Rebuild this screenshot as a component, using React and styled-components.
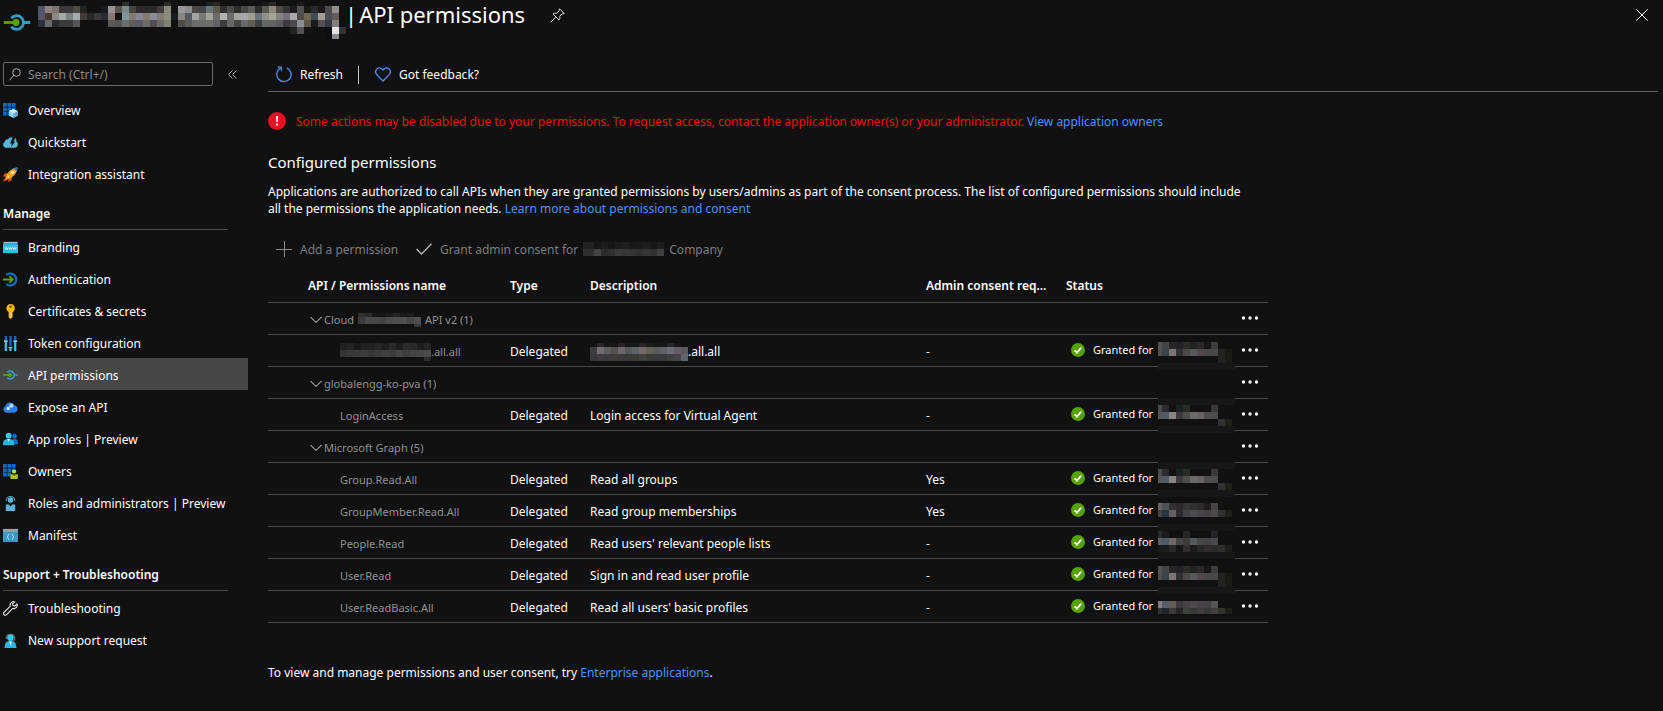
import React from 'react';
import styled, { createGlobalStyle } from 'styled-components';

const GlobalStyle = createGlobalStyle`
  * { box-sizing: border-box; }
  body {
    margin: 0;
    background: #111111;
    color: #ffffff;
    font-family: "Noto Sans", "Open Sans", sans-serif;
    font-size: 12px;
    line-height: 17px;
  }
  button, input { font: inherit; color: inherit; }
`;

/* ---------- pieces shared by the whole blade ---------- */

const PlainButton = styled.button`
  display: inline-flex;
  align-items: center;
  padding: 0;
  border: 0;
  background: transparent;
  cursor: pointer;
  white-space: nowrap;
  &:disabled { color: #7d7d7d; cursor: default; }
`;

const Link = styled.a`
  color: #4894fe;
  text-decoration: none;
`;

const Drawing = styled.svg`
  display: block;
  flex: none;
`;

/* ---------- header ---------- */

const Header = styled.header`
  display: flex;
  align-items: flex-start;
  height: 46px;
  padding: 0 15px 0 3px;
`;

const HeaderIcon = styled.span`
  padding-top: 14px;
  margin-right: 7px;
`;

const HeaderMosaic = styled.span`
  padding-top: 2px;
  margin-right: -3px;
`;

const Title = styled.h1`
  display: flex;
  gap: 2px;
  margin: 0;
  font-size: 22px;
  font-weight: 400;
  line-height: 28px;
  white-space: nowrap;
`;

const PinButton = styled(PlainButton)`
  margin: 8px auto 0 25px;
`;

const CloseButton = styled(PlainButton)`
  margin-top: 9px;
`;

/* ---------- side menu ---------- */

const Body = styled.div`
  display: flex;
  align-items: flex-start;
  gap: 20px;
`;

const Side = styled.aside`
  flex: none;
  width: 248px;
  padding-top: 16px;
`;

const SearchRow = styled.div`
  display: flex;
  align-items: center;
  gap: 15px;
  height: 24px;
  margin: 0 0 7px 3px;
`;

const SearchBox = styled.label`
  display: flex;
  align-items: center;
  gap: 7px;
  width: 210px;
  height: 24px;
  padding: 0 5px;
  border: 1px solid #6a6a6a;
  border-radius: 2px;
`;

const SearchInput = styled.input`
  flex: 1;
  min-width: 0;
  padding: 0;
  border: 0;
  outline: 0;
  background: transparent;
  &::placeholder { color: #8a8a8a; opacity: 1; }
`;

const MenuHeading = styled.h2`
  height: 41px;
  margin: 0 20px 0 3px;
  padding-top: 16px;
  border-bottom: 1px solid #484848;
  font-size: 12px;
  font-weight: 600;
  line-height: 17px;
`;

const MenuList = styled.ul`
  margin: 0;
  padding: 0;
  list-style: none;
`;

const MenuLink = styled.a`
  display: flex;
  align-items: center;
  gap: 10px;
  height: 32px;
  padding: 2px 0 0 3px;
  background: ${(p) => (p.$active ? '#474747' : 'transparent')};
  color: #ffffff;
  text-decoration: none;
  white-space: nowrap;
`;

/* ---------- main pane ---------- */

const Main = styled.main`
  flex: 1;
  min-width: 0;
  padding-right: 5px;
`;

const CommandBar = styled.div`
  display: flex;
  align-items: center;
  height: 46px;
  padding: 12px 8px 0;
  border-bottom: 1px solid #606060;
`;

const Command = styled(PlainButton)`
  gap: 8px;
`;

const CommandDivider = styled.span`
  width: 1px;
  height: 18px;
  margin: 0 16px 0 15px;
  background: #c8c8c8;
`;

const Content = styled.div`
  max-width: 1000px;
`;

const Alert = styled.p`
  display: flex;
  align-items: center;
  gap: 10px;
  margin: 20px 0 21px;
  color: #f40a0a;
  white-space: nowrap;
`;

const SectionTitle = styled.h2`
  margin: 0 0 10px;
  font-size: 15px;
  font-weight: 400;
  line-height: 22px;
`;

const Paragraph = styled.p`
  margin: 0;
  padding-right: 16px;
`;

const ActionBar = styled.div`
  display: flex;
  align-items: center;
  gap: 18px;
  height: 24px;
  margin: 20px 0 10px;
  padding-left: 8px;
`;

const Table = styled.table`
  width: 100%;
  table-layout: fixed;
  border-spacing: 0;
`;

const HeadCell = styled.th`
  height: 32px;
  padding: 0 0 2px;
  border-bottom: 1px solid #484848;
  font-weight: 600;
  text-align: left;
  white-space: nowrap;
`;

const Cell = styled.td`
  height: 32px;
  padding: 2px 0 0 ${(p) => (p.$indent ? '32px' : '0')};
  border-bottom: 1px solid #484848;
  color: ${(p) => (p.$muted ? '#919191' : '#ffffff')};
  font-size: ${(p) => (p.$muted ? '11px' : '12px')};
  white-space: nowrap;
`;

const Inline = styled.span`
  display: flex;
  align-items: center;
  gap: ${(p) => p.$gap || 0}px;
`;

const GroupToggle = styled(PlainButton)`
  gap: 2px;
  padding-left: 2px;
  color: #919191;
`;

const Status = styled.div`
  position: relative;
  display: flex;
  align-items: center;
  gap: 8px;
  height: 29px;
  padding: 0 0 4px 5px;
  font-size: 11px;
`;

const StatusMosaic = styled.span`
  position: absolute;
  top: -5px;
  left: 92px;
`;

const MoreAction = styled(PlainButton)`
  display: flex;
  height: 29px;
  padding-bottom: 4px;
`;

const FootNote = styled.p`
  margin: 41px 0 0;
`;

/* ---------- pixelated names ---------- */

function Mosaic({ width, height, rows }) {
  return (
    <Drawing width={width} height={height} viewBox={`0 0 ${width} ${height}`} shapeRendering="crispEdges" aria-hidden="true">
      {rows.map((row) => {
        const first = row.first || 7;
        return row.cells.split(' ').map((c, i) =>
          c === '-' ? null : (
            <rect
              key={`${row.y}-${i}`}
              x={i === 0 ? 0 : first + (i - 1) * 7}
              y={row.y}
              width={i === 0 ? first : 7}
              height={row.h || 7}
              fill={`#${c}`}
            />
          )
        );
      })}
    </Drawing>
  );
}

const titleMosaic = [
  { y: 0, h: 4, cells: '- - - - - - - - - - - - 27302f - - - - - 2b2b28 - - - - - 1e2226 2a2820 - - - - - - 1a1c1e 2a2a24 - - - 1a1a1a' },
  { y: 4, cells: '53566b 8f8380 7a7472 3a3836 3a3a38 4c4b46 222222 - - 141a20 979393 5a5350 7a8a89 454440 2e282b 2e292a 2b272b 403b3d 88897a - 97969a 8b8d90 4b4846 44464a 68727a 5e5a48 2e3030 4c4b49 2c2e2e 474747 5a5a58 2a2d30 5a5a55 8c8a75 4b4845 343434 1c1c1e 505050 1a1a1a 2a2a2c 1a1a1c 4c4a4a 938f90' },
  { y: 11, cells: '53566b 4a3630 8b8885 a4a8a8 7d8280 a6acae 463a33 252829 3b3836 272c3a 8a7870 121212 81989b 85796c 85859b 857c6c 8b89a0 857c70 8b8c7a 141c22 8b8682 4f5c66 a3a3a3 747a74 a3a494 6a6a6a b0b0ac 6a6c6e a5a5a0 a7a5b0 a09e88 66737a 8f8f88 a3a594 84837e 7a707c aca8aa 4f4c4e 726654 414a56 a39c92 4a4d56 635c58' },
  { y: 18, cells: '2b2f3a 6a6a6a 2a2a2a 3a3a3a 3a3a3a 555555 - - - - 5a5856 555555 6b6c6e 5f5e5c 5a5a60 6c6c6a 544c52 6a6a66 7f8272 - 4e4b4a 5a5a5a 6c6e6e 6b6b6b 6e6f6a 5f6266 3c3c3c 686868 464646 6a6a6c 5f5f58 3d4144 656866 606462 5a5a5a 3d3a3e 4c4a4a 8b8f94 5d5548 1a1a1a 544e4e 353a42 847f7c' },
  { y: 25, cells: '- - - - - - - - - - - - - - - - - - - - - - - - - - - - - - - - - - - - 222222 525252 171513 - - 0d0e10 e4e4e4 333333' },
  { y: 32, h: 5, cells: '- - - - - - - - - - - - - - - - - - - - - - - - - - - - - - - - - - - - - - - - - 0d0e10 8b8b90' },
];

const STRIP = '171717 171717 171717 171717 171717 171717 171717 171717 171717 171717 171717';
const TOP_A = '545454 444444 262626 222226 2c2c2a 242424 2a2a2a 161616 3c3c3c';
const MID_A = '544e50 3a4450 7c7274 343230 4c4848 56585a 524850 484848 484a4a';
const TOP_B = '4c4a4a 2c2c2c 111111 1c2222 2a2c2a 111111 111111 111111 3a3838';
const MID_B = '5c5458 4c5c68 8c8482 3c3a3c 504c4a 6a6a6a 686064 504e4a 484c4c';

/* Offsets start 3px above the row so that each strip can hide its rule. */
const statusMosaics = {
  a: [
    { y: 10, first: 4, cells: TOP_A },
    { y: 17, first: 4, cells: `${MID_A} 222220 1a1a16` },
    { y: 24, first: 4, cells: '- - - - - - - - - 222220 1a1a16' },
    { y: 31, cells: STRIP },
  ],
  b: [
    { y: 2, cells: STRIP },
    { y: 9, first: 4, cells: TOP_B },
    { y: 16, first: 4, cells: MID_B },
    { y: 23, first: 4, cells: '- - - - - - - - - 303030 20201a' },
    { y: 30, cells: STRIP },
  ],
  c: [
    { y: 11, first: 4, cells: '6a6264 4c5456 343230 2c2a2e 363636 2c302e 302a2c 1e1c1c 464646' },
    { y: 18, first: 4, cells: '444244 283444 665e60 2c2a2c 444244 4c4c50 464648 444044 4a4848 303030 20201a' },
    { y: 32, cells: STRIP },
  ],
  d: [
    { y: 7, first: 4, cells: '2c2c2c 1c1c1c 111111 111111 262624 111111 111111 111111 242424' },
    { y: 14, first: 4, cells: '645c60 4e5c68 726868 444444 3e3c38 545a5e 484646 444444 4a4a4e' },
    { y: 21, first: 4, cells: '1a1a1a 1c1c1c 2a2a2a 161616 302e2e 1c1c1c 282828 302c2c 2a2a2a 303030 20201a' },
    { y: 28, cells: STRIP },
  ],
  e: [
    { y: 13, first: 4, cells: '847c80 545e68 645c58 3c3a3c 444244 4c4a4a 464446 444244 545656' },
    { y: 20, h: 6, first: 4, cells: '303030 20262a 403a3c 262626 3e403c 363a38 423c40 343836 443e40 34342e 20201a' },
  ],
};

/* ---------- icons ---------- */

const Icon16 = ({ children, size = 15, ...rest }) => (
  <Drawing width={size} height={size} viewBox="0 0 16 16" fill="none" aria-hidden="true" {...rest}>
    {children}
  </Drawing>
);

const Squares = () => (
  <path fill="#0a6cc9" d="M0 0h4v4H0zM4.7 0h4v4h-4zM9.4 0h4v4h-4zM0 4.7h4v4H0zM4.7 4.7h4v4h-4zM9.4 4.7h4v4h-4zM0 9.4h4v4H0zM4.7 9.4h4v4h-4z" />
);

const PlugIcon = ({ width = 15, height = 10 }) => (
  <Drawing width={width} height={height} viewBox="0 0 28 18" fill="none" aria-hidden="true">
    <path d="M8 4.5A7.2 7.2 0 1 1 8 13.500M20.500 9H28" stroke="#3999c6" strokeWidth="3" />
    <path d="M0 9h13" stroke="#59a500" strokeWidth="3" />
    <circle cx="13" cy="9" r="3.600" fill="#59a500" />
  </Drawing>
);

const icons = {
  overview: (
    <Icon16>
      <Squares />
      <path d="M11 6.500l4.500 2v5L11 16l-4.500-2.500v-5z" fill="#9bd3ef" />
      <path d="M11 10.800l4.500-2.300v5L11 16z" fill="#5fb3dc" />
      <path d="M11 6.500l4.500 2-4.500 2.300-4.500-2.300z" fill="#d3eefb" />
    </Icon16>
  ),
  quickstart: (
    <Icon16>
      <path d="M3 13.500A3.200 3.200 0 0 1 1.800 7.500C2 5.500 3.500 4.200 5.300 4.500 6.500 2.800 8.500 2 10.200 2.600L9 5.500 7.500 9h2l-.8 3.500L13 6.800h-2l2.200-3.600c1 .9 1.300 2.300 1 3.800 2.500 1 2.300 6-1.200 6.500z" fill="#59b4d9" />
    </Icon16>
  ),
  rocket: (
    <Icon16>
      <path d="M5 6L1.500 7 0 10.500l3.500-.5zM10 11l-1 3.500L5.500 16l.5-3.500z" fill="#c95a0a" />
      <path d="M3 10L0 15.800 6 13z" fill="#e8590c" />
      <path d="M15.500.5C10 1 5.500 4.500 3 10l3 3c5.500-2.500 9-7 9.500-12.500z" fill="#fba51e" />
      <path d="M15.800.2l-4 1.500 2.500 2.500z" fill="#0c72d4" />
      <circle cx="10.300" cy="5.700" r="1.800" fill="#ffe8b8" />
      <path d="M3 13l4-4" stroke="#ffd35c" strokeWidth="1.200" />
    </Icon16>
  ),
  branding: (
    <Icon16>
      <path d="M0 2h16v12H0z" fill="#2bc0e4" />
      <path d="M0 2h16v2.500H0z" fill="#0a6fb8" />
      <path d="M1 3h14" stroke="#e8f6fb" />
      <path d="M2 8l1 2 .9-2 .9 2 .9-2M6.300 8l1 2 .9-2 .9 2 .9-2M10.600 8l1 2 .9-2 .9 2 .9-2" stroke="#f3fcff" strokeWidth=".8" />
    </Icon16>
  ),
  auth: (
    <Icon16>
      <path d="M3.500 3.200a6.400 6.400 0 1 1 0 9.600" stroke="#0f6cc4" strokeWidth="2.400" />
      <path d="M0 8h10M6.800 4.300L10.500 8l-3.700 3.700" stroke="#59a500" strokeWidth="1.900" />
    </Icon16>
  ),
  key: (
    <Icon16>
      <path d="M8 0a4.600 4.600 0 0 1 2.200 8.600V14L8 16l-2-2V8.600A4.600 4.600 0 0 1 8 0z" fill="#fdb813" />
      <path d="M8.800 8v6.500" stroke="#ffde5a" strokeWidth="1.200" />
      <circle cx="8" cy="2.800" r="1.300" fill="#6b4a00" />
    </Icon16>
  ),
  token: (
    <Icon16>
      <path d="M3 0v5M8 0v11M13 0v5" stroke="#0f6cc4" strokeWidth="2.400" />
      <path d="M3 6v10M8 13v3M13 6v10" stroke="#35c3ec" strokeWidth="2.400" />
      <path d="M1 5.500h4M6 12.500h4M11 5.500h4" stroke="#c9f1ff" strokeWidth="1.200" />
    </Icon16>
  ),
  plug: <PlugIcon />,
  cloud: (
    <Icon16>
      <path d="M3.700 13.500A3.500 3.500 0 0 1 2.700 6.700a5 5 0 0 1 9.500-1 4 4 0 0 1 .3 7.800z" fill="#2b7fe6" />
      <circle cx="5.500" cy="9" r="1.800" fill="#d3e7ff" />
      <circle cx="9" cy="6" r="2.200" fill="#b4d4fb" />
      <path d="M5.500 9L9 6" stroke="#d3e7ff" />
    </Icon16>
  ),
  users: (
    <Icon16>
      <circle cx="12.300" cy="4.500" r="2.600" fill="#0f6cc4" />
      <path d="M9 13V10.500c0-2 1.200-3 3.500-3s3.500 1.500 3.500 4V13z" fill="#0f6cc4" />
      <circle cx="6" cy="4" r="3.200" fill="#32c8ec" />
      <path d="M0 14v-2c0-3 2-4.600 6-4.600S12 9 12 12v2z" fill="#2ab5dc" />
      <path d="M4.500 7.500h3L6 10.500z" fill="#dff8ff" />
    </Icon16>
  ),
  owners: (
    <Icon16>
      <Squares />
      <circle cx="11.800" cy="8" r="2.200" fill="#c9d93a" />
      <path d="M8 16v-5h7.800v5z" fill="#a7c51c" />
      <path d="M10.500 11h2.800L12 13z" fill="#3d4b00" />
    </Icon16>
  ),
  roles: (
    <Icon16>
      <circle cx="8" cy="4.300" r="3" fill="#59b4d9" />
      <path d="M3.500 5a4.500 4.500 0 0 1 9 0" stroke="#4fa0c2" strokeWidth="1.200" />
      <path d="M3 16V9h10v7z" fill="#59b4d9" />
      <path d="M6 8.500h4L8 11.500z" fill="#111111" />
    </Icon16>
  ),
  manifest: (
    <Icon16>
      <path d="M0 1h16v14H0z" fill="#3999c6" />
      <path d="M0 1h16v3H0z" fill="#a0a1a2" />
      <path d="M6.600 6.500c-1.600 0-.5 2.500-2 3 1.500.5.4 3 2 3M9.400 6.500c1.600 0 .5 2.500 2 3-1.500.5-.4 3-2 3" stroke="#d4ecf7" />
    </Icon16>
  ),
  wrench: (
    <Icon16>
      <path d="M14.800 3.200l-2.300 2.200-1.900-.6-.4-1.700L12.500 1C10.600.2 8.500 1.100 7.800 3c-.3.800-.2 1.700 0 2.500L1.200 12c-.8.800-.8 2 0 2.700.8.700 2 .7 2.700-.1l6.500-6.700c2.800 1 5.600-1.500 4.400-4.700z" stroke="#e2e2e2" strokeWidth="1.200" />
    </Icon16>
  ),
  support: (
    <Icon16>
      <path d="M3.500 6.500V4.500C4 .2 12 .2 12.500 4.500v2.800l-2 1" stroke="#6c6c6c" strokeWidth="1.200" />
      <circle cx="8" cy="5" r="3.500" fill="#32c8ec" />
      <path d="M1.500 16l1-4.500C3 9.500 4.500 8.500 8 8.500s5 1 5.500 3l1 4.500z" fill="#2ab5dc" />
      <path d="M6.500 9h3L8 13.500z" fill="#eafaff" />
    </Icon16>
  ),
};

const menu = [
  { items: [['overview', 'Overview'], ['quickstart', 'Quickstart'], ['rocket', 'Integration assistant']] },
  {
    heading: 'Manage',
    items: [
      ['branding', 'Branding'],
      ['auth', 'Authentication'],
      ['key', 'Certificates & secrets'],
      ['token', 'Token configuration'],
      ['plug', 'API permissions', true],
      ['cloud', 'Expose an API'],
      ['users', 'App roles | Preview'],
      ['owners', 'Owners'],
      ['roles', 'Roles and administrators | Preview'],
      ['manifest', 'Manifest'],
    ],
  },
  { heading: 'Support + Troubleshooting', items: [['wrench', 'Troubleshooting'], ['support', 'New support request']] },
];

const groups = [
  {
    id: 'cloud',
    label: (
      <Inline $gap={4}>
        Cloud
        <Mosaic width={63} height={14} rows={[
          { y: 0, h: 4, cells: '303030 2a2a2a 161616 161616 1c1c1c 242424 1a1a1a 1c1c1c' },
          { y: 4, cells: '3a3a3a 484848 484848 444444 4c4c4c 4e4e4e 505050 464646 505050' },
          { y: 11, h: 3, cells: '- - - - - - - - 3a3a3a' },
        ]} />
        API v2 (1)
      </Inline>
    ),
    rows: [
      {
        id: 'cloud-all',
        name: (
          <Inline>
            <Mosaic width={91} height={18} rows={[
              { y: 0, cells: '202020 242424 1a1a1a 222222 222222 262626 1e1e1e 2a2a2a 1e1e1e 2c2c2c 2a2a2a 1e1e1e 262626' },
              { y: 7, cells: '343434 383838 3a3a3a 3c3c3c 363636 3c3c3c 404040 3c3c3c 464646 3e3e3e 444444 464646 4c4c4c' },
              { y: 14, h: 4, cells: '- - - - - - - - - - - - 2c2c2c' },
            ]} />
            .all.all
          </Inline>
        ),
        description: (
          <Inline>
            <Mosaic width={98} height={18} rows={[
              { y: 0, h: 4, cells: '141414 2a262a 161616 161616 2a2028 161616 141a16 2a2424 1c1c1c 161616 161618 26262e 1a1416' },
              { y: 4, cells: '3c3c40 746a74 605c5c 54504e 70666e 505c5a 5c6268 746868 62624e 565c5a 5e6064 6a6c7a 685c68 5a5a5e' },
              { y: 11, cells: '383838 403c40 3c3c3c 403c3a 3a3a3a 363a38 3c3c34 424040 3a3a38 383a3c 383a3c 404040 46444a 5c646c' },
            ]} />
            .all.all
          </Inline>
        ),
        consent: '-',
        mosaic: 'a',
      },
    ],
  },
  {
    id: 'globalengg',
    label: 'globalengg-ko-pva (1)',
    rows: [{ id: 'login', name: 'LoginAccess', description: 'Login access for Virtual Agent', consent: '-', mosaic: 'b' }],
  },
  {
    id: 'graph',
    label: 'Microsoft Graph (5)',
    rows: [
      { id: 'group', name: 'Group.Read.All', description: 'Read all groups', consent: 'Yes', mosaic: 'b' },
      { id: 'member', name: 'GroupMember.Read.All', description: 'Read group memberships', consent: 'Yes', mosaic: 'c' },
      { id: 'people', name: 'People.Read', description: "Read users' relevant people lists", consent: '-', mosaic: 'd' },
      { id: 'user', name: 'User.Read', description: 'Sign in and read user profile', consent: '-', mosaic: 'a' },
      { id: 'basic', name: 'User.ReadBasic.All', description: "Read all users' basic profiles", consent: '-', mosaic: 'e' },
    ],
  },
];

const MoreButton = () => (
  <MoreAction aria-label="More actions">
    <Drawing width="18" height="4" viewBox="0 0 18 4" fill="#ffffff" aria-hidden="true">
      <circle cx="2.500" cy="2" r="1.700" />
      <circle cx="9" cy="2" r="1.700" />
      <circle cx="15.500" cy="2" r="1.700" />
    </Drawing>
  </MoreAction>
);

function SideMenu() {
  return (
    <Side>
      <SearchRow>
        <SearchBox>
          <Drawing width="12" height="13" viewBox="0 0 12 13" fill="none" stroke="#b0b0b0" aria-label="Search">
            <circle cx="7.500" cy="4.500" r="3.800" />
            <path d="M4.800 7.300L.5 12.300" />
          </Drawing>
          <SearchInput type="text" placeholder="Search (Ctrl+/)" />
        </SearchBox>
        <PlainButton aria-label="Collapse menu">
          <Drawing width="9" height="9" viewBox="0 0 9 9" fill="none" stroke="#b8b8b8" aria-hidden="true">
            <path d="M4.500.5l-4 4 4 4M8.500.5l-4 4 4 4" />
          </Drawing>
        </PlainButton>
      </SearchRow>
      <nav>
        {menu.map((section) => (
          <React.Fragment key={section.heading || 'top'}>
            {section.heading && <MenuHeading>{section.heading}</MenuHeading>}
            <MenuList>
              {section.items.map(([icon, label, active]) => (
                <li key={label}>
                  <MenuLink href="#" $active={active}>{icons[icon]}{label}</MenuLink>
                </li>
              ))}
            </MenuList>
          </React.Fragment>
        ))}
      </nav>
    </Side>
  );
}

function PermissionsTable() {
  return (
    <Table>
      <colgroup>
        <col style={{ width: 40 }} />
        <col style={{ width: 202 }} />
        <col style={{ width: 80 }} />
        <col />
        <col style={{ width: 140 }} />
        <col style={{ width: 175 }} />
        <col style={{ width: 27 }} />
      </colgroup>
      <thead>
        <tr>
          <HeadCell />
          <HeadCell>API / Permissions name</HeadCell>
          <HeadCell>Type</HeadCell>
          <HeadCell>Description</HeadCell>
          <HeadCell>Admin consent req...</HeadCell>
          <HeadCell>Status</HeadCell>
          <HeadCell />
        </tr>
      </thead>
      <tbody>
        {groups.map((group) => (
          <React.Fragment key={group.id}>
            <tr>
              <Cell />
              <Cell colSpan={5} $muted>
                <GroupToggle aria-expanded="true">
                  <Drawing width="12" height="8" viewBox="0 0 12 8" fill="none" stroke="#e6e6e6" aria-hidden="true">
                    <path d="M.5 1L6 6.500 11.500 1" />
                  </Drawing>
                  {group.label}
                </GroupToggle>
              </Cell>
              <Cell><MoreButton /></Cell>
            </tr>
            {group.rows.map((row) => (
              <tr key={row.id}>
                <Cell />
                <Cell $indent $muted>{row.name}</Cell>
                <Cell>Delegated</Cell>
                <Cell>{row.description}</Cell>
                <Cell>{row.consent}</Cell>
                <Cell>
                  <Status>
                    <Drawing width="14" height="14" viewBox="0 0 14 14" aria-hidden="true">
                      <circle cx="7" cy="7" r="7" fill="#57a300" />
                      <path d="M3.500 7.300l2.300 2.300 4.500-5" fill="none" stroke="#ffffff" strokeWidth="1.800" />
                    </Drawing>
                    Granted for
                    <StatusMosaic><Mosaic width={77} height={40} rows={statusMosaics[row.mosaic]} /></StatusMosaic>
                  </Status>
                </Cell>
                <Cell><MoreButton /></Cell>
              </tr>
            ))}
          </React.Fragment>
        ))}
      </tbody>
    </Table>
  );
}

export default function App() {
  return (
    <>
      <GlobalStyle />
      <Header>
        <HeaderIcon><PlugIcon width={28} height={17} /></HeaderIcon>
        <HeaderMosaic><Mosaic width={310} height={37} rows={titleMosaic} /></HeaderMosaic>
        <Title><span>|</span><span>API permissions</span></Title>
        <PinButton aria-label="Pin">
          <Drawing width="15" height="15" viewBox="0 0 15 15" fill="none" stroke="#e6e6e6" aria-hidden="true">
            <path d="M9.500.8l4.700 4.700-1.400.5-.6-.3-2.500 2.600c.4 1.500.2 2.800-.7 3.700L3 6c1-.9 2.300-1.100 3.700-.7l2.600-2.500-.3-.6zM5.800 9.200L.7 14.300" />
          </Drawing>
        </PinButton>
        <CloseButton aria-label="Close">
          <Drawing width="12" height="12" viewBox="0 0 12 12" fill="none" stroke="#ffffff" aria-hidden="true">
            <path d="M.3.300l11.400 11.400M11.700.3L.3 11.700" />
          </Drawing>
        </CloseButton>
      </Header>
      <Body>
        <SideMenu />
        <Main>
          <CommandBar>
            <Command>
              <Drawing width="16" height="17" viewBox="0 0 16 17" fill="none" stroke="#4894fe" strokeWidth="1.300" aria-hidden="true">
                <path d="M10.800 1.800A7.200 7.200 0 1 1 4.300 2.200M1.700 1.200h3.600v3.600" />
              </Drawing>
              Refresh
            </Command>
            <CommandDivider />
            <Command>
              <Drawing width="16" height="15" viewBox="0 0 16 15" fill="none" stroke="#4894fe" strokeWidth="1.300" aria-hidden="true">
                <path d="M8 14L1.700 7.600C-.6 4.800 1 .8 4.400.8 6.200.8 7.400 1.900 8 3 8.600 1.900 9.800.8 11.600.8c3.400 0 5 4 2.700 6.800z" />
              </Drawing>
              Got feedback?
            </Command>
          </CommandBar>
          <Content>
            <Alert>
              <Drawing width="18" height="18" viewBox="0 0 18 18" aria-hidden="true">
                <circle cx="9" cy="9" r="9" fill="#e81123" />
                <path d="M8 4h2l-.3 6H8.300zM8 11.500h2v2H8z" fill="#ffffff" />
              </Drawing>
              <span>
                Some actions may be disabled due to your permissions. To request access, contact the application owner(s) or your administrator.{' '}
                <Link href="#">View application owners</Link>
              </span>
            </Alert>
            <SectionTitle>Configured permissions</SectionTitle>
            <Paragraph>
              Applications are authorized to call APIs when they are granted permissions by users/admins as part of the consent process. The list of configured permissions should include all the permissions the application needs.{' '}
              <Link href="#">Learn more about permissions and consent</Link>
            </Paragraph>
            <ActionBar>
              <Command disabled>
                <Drawing width="16" height="16" viewBox="0 0 16 16" fill="none" stroke="#8a8a8a" aria-hidden="true">
                  <path d="M8.500 0v16M0 8.500h16" />
                </Drawing>
                Add a permission
              </Command>
              <Command disabled>
                <Drawing width="16" height="12" viewBox="0 0 16 12" fill="none" stroke="#b4b4b4" strokeWidth="1.300" aria-hidden="true">
                  <path d="M.5 6L5.500 11 15.500.8" />
                </Drawing>
                <Inline $gap={5}>
                  Grant admin consent for
                  <Mosaic width={81} height={14} rows={[
                    { y: 0, first: 11, cells: '222222 161616 1c1c1c 161616 1c1c1c 202020 181818 1a1a1a 1e1e1e 181818 1e1e1e' },
                    { y: 7, first: 11, cells: '303030 444444 2c2c2c 303030 3a3a3a 363636 343434 303030 363636 323232 404040' },
                  ]} />
                  Company
                </Inline>
              </Command>
            </ActionBar>
            <PermissionsTable />
            <FootNote>
              To view and manage permissions and user consent, try <Link href="#">Enterprise applications</Link>.
            </FootNote>
          </Content>
        </Main>
      </Body>
    </>
  );
}
